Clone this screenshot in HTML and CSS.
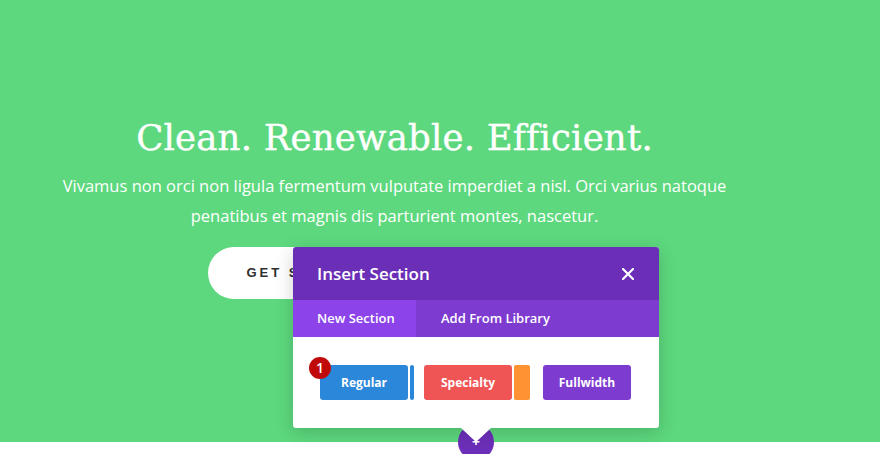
FILE: index.html
```html
<!DOCTYPE html>
<html lang="en">
<head>
	<meta charset="UTF-8">
	<title>Insert Section</title>
	<link rel="stylesheet" href="styles.css">
</head>
<body>
	<div class="hero">
		<div class="hero-inner">
			<h1 class="hero-title">Clean. Renewable. Efficient.</h1>
			<p class="hero-text">Vivamus non orci non ligula fermentum vulputate imperdiet a nisl. Orci varius natoque penatibus et magnis dis parturient montes, nascetur.</p>
			<div class="hero-btns">
				<a class="pill" href="#">GET STARTED</a>
				<a class="pill" href="#">LEARN MORE</a>
			</div>
		</div>

		<div class="add-circle">+</div>

		<div class="modal">
			<div class="modal-head">
				<span class="modal-title">Insert Section</span>
				<svg class="modal-close" width="12" height="12" viewBox="0 0 12 12">
					<path d="M1 1 L11 11 M11 1 L1 11" stroke="#fff" stroke-width="2.2" stroke-linecap="round"/>
				</svg>
			</div>
			<div class="modal-tabs">
				<span class="tab active">New Section</span>
				<span class="tab">Add From Library</span>
			</div>
			<div class="modal-body">
				<div class="sec-btn blue">
					<span class="badge">1</span>
					<span class="sec-main">Regular</span>
					<span class="sec-side"></span>
				</div>
				<div class="sec-btn red">
					<span class="sec-main">Specialty</span>
					<span class="sec-side"></span>
				</div>
				<div class="sec-btn purple">
					<span class="sec-main">Fullwidth</span>
				</div>
			</div>
		</div>
	</div>
	<div class="below"></div>
</body>
</html>
```

FILE: styles.css
```css
*{
	margin: 0;
	padding: 0;
	box-sizing: border-box;
}
body{
	font-family: "Open Sans", "Liberation Sans", sans-serif;
	background: #fff;
	overflow: hidden;
}
.hero{
	position: relative;
	height: 442px;
	background: #5dd87e;
	padding: 113px 91px 0 0;
}
.hero-inner{
	width: 700px;
	margin: 0 auto;
	text-align: center;
	color: #fff;
}
.hero-title{
	font-family: "DejaVu Serif", serif;
	font-weight: normal;
	font-size: 35.5px;
	line-height: 50px;
	letter-spacing: 0.2px;
	-webkit-text-stroke: 0.4px #fff;
}
.hero-text{
	margin-top: 8px;
	font-size: 16.5px;
	line-height: 30px;
}
.hero-btns{
	display: flex;
	justify-content: center;
	gap: 20px;
	margin-top: 16px;
}
.pill{
	display: block;
	width: 177px;
	height: 52px;
	line-height: 52px;
	border-radius: 26px;
	background: #fff;
	color: #2e2e2e;
	font-family: "Liberation Sans", sans-serif;
	font-weight: bold;
	font-size: 13px;
	letter-spacing: 3px;
	text-decoration: none;
	text-align: left;
	padding-left: 39px;
}
.add-circle{
	position: absolute;
	left: 458px;
	top: 424px;
	width: 36px;
	height: 36px;
	border-radius: 50%;
	background: #6b2fb8;
	color: #fff;
	font-size: 14px;
	font-weight: bold;
	line-height: 36px;
	text-align: center;
	z-index: 1;
}
.modal{
	position: absolute;
	left: 293px;
	top: 247px;
	width: 366px;
	background: #fff;
	border-radius: 3px;
	box-shadow: 0 4px 18px rgba(0, 0, 0, 0.18);
	z-index: 2;
}
.modal:after{
	content: "";
	position: absolute;
	left: 168px;
	bottom: -14px;
	border-left: 15px solid transparent;
	border-right: 15px solid transparent;
	border-top: 14px solid #fff;
}
.modal-head{
	display: flex;
	justify-content: space-between;
	align-items: center;
	height: 53px;
	padding: 0 25px 0 24px;
	background: #6a2fb6;
	border-radius: 3px 3px 0 0;
}
.modal-title{
	color: #fff;
	font-size: 17px;
	font-weight: 600;
}
.modal-tabs{
	display: flex;
	height: 37px;
	background: #7d3bd0;
}
.tab{
	color: #fff;
	font-size: 13px;
	font-weight: 600;
	line-height: 37px;
	padding: 0 24px;
	white-space: nowrap;
}
.tab.active{
	background: #8c44ea;
	width: 123px;
	margin-right: 1px;
}
.modal-body{
	display: flex;
	height: 91px;
	padding: 28px 0 0 27px;
}
.sec-btn{
	position: relative;
	display: flex;
	gap: 2px;
	height: 35px;
}
.sec-main{
	display: block;
	width: 88px;
	height: 35px;
	line-height: 35px;
	border-radius: 3px;
	color: #fff;
	font-size: 12px;
	font-weight: bold;
	text-align: center;
}
.sec-side{
	display: block;
	height: 35px;
	border-radius: 2px;
}
.blue{
	margin-right: 10px;
}
.blue .sec-main{
	background: #2b87da;
}
.blue .sec-side{
	width: 4px;
	background: #2b87da;
}
.red{
	margin-right: 13px;
}
.red .sec-main{
	background: #ef5555;
}
.red .sec-side{
	width: 16px;
	background: #ff9232;
}
.purple .sec-main{
	background: #7e3bd0;
}
.badge{
	position: absolute;
	left: -11px;
	top: -8px;
	width: 22px;
	height: 22px;
	border-radius: 50%;
	background: #c00a0a;
	color: #fff;
	font-size: 14px;
	font-weight: 600;
	line-height: 22px;
	text-align: center;
}
.below{
	height: 12px;
	background: #fff;
}
```
